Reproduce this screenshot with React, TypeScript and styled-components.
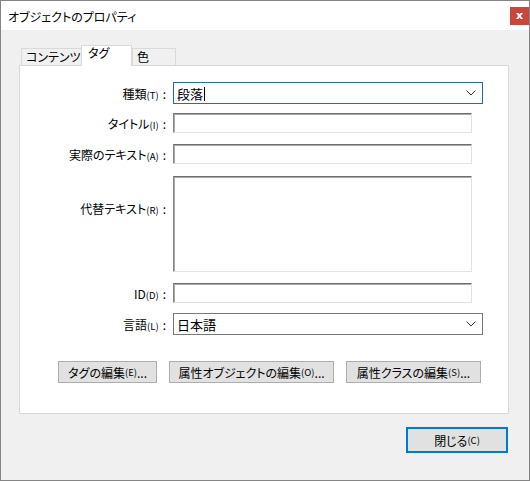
import React from 'react';
import styled, {createGlobalStyle} from 'styled-components';

const GlobalStyle = createGlobalStyle`
    html, body {
        margin: 0;
        padding: 0;
        background: #ffffff;
    }

    body {
        font-family: "Noto Sans CJK JP", "Noto Sans", sans-serif;
        font-size: 12px;
        font-feature-settings: "palt" 1;
        color: #000;
    }
`;

const Window = styled.div`
    width: 530px;
    height: 481px;
    box-sizing: border-box;
    border: 1px solid #858585;
    display: flex;
    flex-direction: column;
    overflow: hidden;
`;

const TitleBar = styled.div`
    height: 29px;
    flex: none;
    background: #fff;
    display: flex;
    justify-content: space-between;
    align-items: flex-start;
    padding-left: 7px;
`;

const Title = styled.span`
    line-height: 31px;
    font-size: 12px;
    color: #000;
`;

const CloseBox = styled.div`
    width: 19px;
    height: 18px;
    margin-top: 6px;
    background: #c7463d;
    color: #fff;
    font-family: "DejaVu Sans", sans-serif;
    font-size: 11px;
    font-weight: bold;
    display: flex;
    align-items: center;
    justify-content: center;
    padding-bottom: 2px;
    box-sizing: border-box;
`;

const Body = styled.div`
    flex: 1;
    background: #f0f0f0;
    padding: 15px 20px 0 18px;
    display: flex;
    flex-direction: column;
`;

const TabStrip = styled.div`
    height: 21px;
    display: flex;
    align-items: flex-end;
    padding-left: 2px;
    margin-bottom: -1px;
    position: relative;
    z-index: 1;
`;

const Tab = styled.div<{$width: number; $active?: boolean}>`
    width: ${p => p.$width}px;
    flex: none;
    box-sizing: border-box;
    border: 1px solid #d9d9d9;
    border-bottom: 0;
    padding-left: ${p => (p.$active ? 6 : 4)}px;
    background: ${p => (p.$active ? '#fff' : '#f0f0f0')};
    height: ${p => (p.$active ? 21 : 17)}px;
    margin-bottom: ${p => (p.$active ? 0 : 1)}px;
    margin-left: ${p => (p.$active ? -1 : 0)}px;
    line-height: ${p => (p.$active ? 14 : 16)}px;
    font-size: 12px;
    white-space: nowrap;
    overflow: hidden;
`;

const Panel = styled.div`
    height: 349px;
    box-sizing: border-box;
    border: 1px solid #d9d9d9;
    background: #fff;
    padding-top: 16px;
    display: flex;
    flex-direction: column;
`;

const Row = styled.div<{$top: number}>`
    display: grid;
    grid-template-columns: 146px auto;
    column-gap: 7px;
    margin-top: ${p => p.$top}px;
`;

const Label = styled.div<{$offset?: number}>`
    text-align: right;
    white-space: nowrap;
    font-size: 12px;
    align-self: ${p => (p.$offset ? 'start' : 'center')};
    padding-top: ${p => p.$offset ?? 0}px;
`;

const Key = styled.span`
    font-size: 9.5px;
`;

const Colon = styled.span`
    margin-left: 4px;
`;

const Combo = styled.div<{$focused?: boolean}>`
    width: 310px;
    height: 22px;
    box-sizing: border-box;
    border: 1px solid ${p => (p.$focused ? '#1c6fb0' : '#7a7a7a')};
    background: #fff;
    display: flex;
    align-items: center;
    justify-content: space-between;
    padding: 0 6px 0 3px;
    font-size: 13px;
`;

const Caret = styled.span`
    display: inline-block;
    width: 1px;
    height: 14px;
    background: #000;
    vertical-align: -2px;
    margin-left: 1px;
`;

const TextBox = styled.div<{$height: number}>`
    width: 299px;
    height: ${p => p.$height}px;
    box-sizing: border-box;
    background: #fff;
    border-top: 1px solid #6e6e6e;
    border-left: 1px solid #848484;
    border-right: 1px solid #e3e3e3;
    border-bottom: 1px solid #e3e3e3;
    box-shadow: inset 1px 1px 0 #a9a9a9;
`;

const ButtonRow = styled.div`
    display: flex;
    gap: 12px;
    margin-top: 26px;
    padding-left: 38px;
`;

const Button = styled.div<{$width: number}>`
    width: ${p => p.$width}px;
    flex: none;
    height: 22px;
    box-sizing: border-box;
    border: 1px solid #adadad;
    background: #e1e1e1;
    display: flex;
    align-items: center;
    justify-content: center;
    font-size: 12px;
    white-space: nowrap;
`;

const Footer = styled.div`
    display: flex;
    justify-content: flex-end;
    padding: 13px 1px 0 0;
`;

const CloseButton = styled.div`
    width: 102px;
    height: 26px;
    box-sizing: border-box;
    border: 2px solid #0078d7;
    background: #e1e1e1;
    display: flex;
    align-items: center;
    justify-content: center;
    font-size: 12px;
`;

const Chevron = () => (
    <svg width='10' height='6' viewBox='0 0 10 6'>
        <polyline points='0.5,0.5 5,5 9.5,0.5' fill='none' stroke='#333' strokeWidth='1' />
    </svg>
);

const FieldLabel = ({text, keyName, offset}: {text: string; keyName: string; offset?: number}) => (
    <Label $offset={offset}>
        {text}
        <Key>({keyName})</Key>
        <Colon>:</Colon>
    </Label>
);

const App = () => (
    <>
        <GlobalStyle />
        <Window>
            <TitleBar>
                <Title>オブジェクトのプロパティ</Title>
                <CloseBox>x</CloseBox>
            </TitleBar>
            <Body>
                <TabStrip>
                    <Tab $width={61}>コンテンツ</Tab>
                    <Tab $width={51} $active>タグ</Tab>
                    <Tab $width={44}>色</Tab>
                </TabStrip>
                <Panel>
                    <Row $top={0}>
                        <FieldLabel text='種類' keyName='T' />
                        <Combo $focused>
                            <span>段落<Caret /></span>
                            <Chevron />
                        </Combo>
                    </Row>
                    <Row $top={9}>
                        <FieldLabel text='タイトル' keyName='I' />
                        <TextBox $height={20} />
                    </Row>
                    <Row $top={11}>
                        <FieldLabel text='実際のテキスト' keyName='A' />
                        <TextBox $height={20} />
                    </Row>
                    <Row $top={12}>
                        <FieldLabel text='代替テキスト' keyName='R' offset={24} />
                        <TextBox $height={96} />
                    </Row>
                    <Row $top={11}>
                        <FieldLabel text='ID' keyName='D' />
                        <TextBox $height={20} />
                    </Row>
                    <Row $top={10}>
                        <FieldLabel text='言語' keyName='L' />
                        <Combo>
                            <span>日本語</span>
                            <Chevron />
                        </Combo>
                    </Row>
                    <ButtonRow>
                        <Button $width={99}>タグの編集<Key>(E)</Key>...</Button>
                        <Button $width={165}>属性オブジェクトの編集<Key>(O)</Key>...</Button>
                        <Button $width={135}>属性クラスの編集<Key>(S)</Key>...</Button>
                    </ButtonRow>
                </Panel>
                <Footer>
                    <CloseButton>閉じる<Key>(C)</Key></CloseButton>
                </Footer>
            </Body>
        </Window>
    </>
);

export default App;
